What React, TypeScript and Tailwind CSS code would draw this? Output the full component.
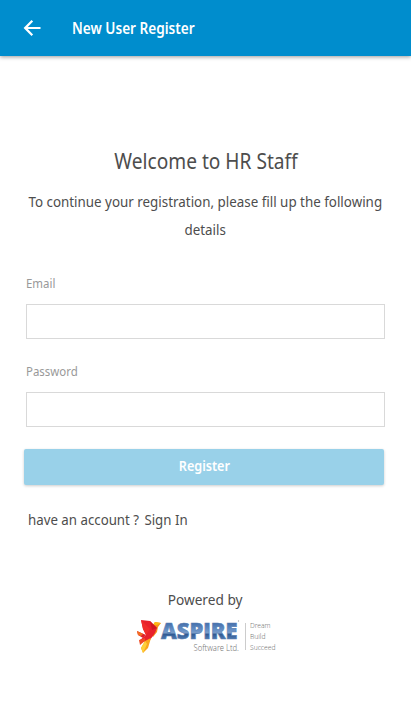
import { useState } from "react";

function AspireLogo() {
  return (
    <svg viewBox="0 0 141 36" className="h-9 w-[141px] overflow-visible" role="img" aria-label="Aspire Software Ltd.">
      <defs>
        <linearGradient id="word" gradientUnits="userSpaceOnUse" x1="0" y1="4" x2="0" y2="21">
          <stop offset="0" stopColor="#456fab" />
          <stop offset="0.4" stopColor="#648fc6" />
          <stop offset="0.58" stopColor="#7a9cc8" />
          <stop offset="0.66" stopColor="#315a92" />
          <stop offset="1" stopColor="#5580b6" />
        </linearGradient>
      </defs>
      {/* bird */}
      <path d="M15 7 18 3 24 4 21 8 20 13 16 18 13 14Z" fill="#f7941d" />
      <path d="M16 6 18 3 24 4 20 6Z" fill="#fdb913" />
      <path d="M4 1 13 2 20 9 18 14 13 21 8 23 3 21 9 16 6 10Z" fill="#e8212b" />
      <path d="M13 2 20 9 15 11Z" fill="#cf1820" />
      <path d="M4 1 13 10 9 16 6 10Z" fill="#f02c2a" />
      <path d="M0 12 9 16 6 19 1 16Z" fill="#e0202a" />
      <path d="M0 12 6 15 4 17 1 16Z" fill="#f36f21" />
      <path d="M2 21 8 19 8 22 3 26Z" fill="#f04a23" />
      <path d="M8 22 14 19 11 29 6 34 4 29Z" fill="#fba61c" />
      <path d="M8 22 10 25 6 34 4 29Z" fill="#fdd03a" />
      <text x="24" y="20" fontFamily="Open Sans, sans-serif" fontWeight="800" fontSize="22" textLength="76.500" lengthAdjust="spacingAndGlyphs" fill="url(#word)" stroke="#5a80b2" strokeWidth="0.600">ASPIRE</text>
      <g fontFamily="Noto Sans, sans-serif" fontWeight="300" fill="#777">
        <text x="56.500" y="32" fontSize="9" textLength="45.500" lengthAdjust="spacingAndGlyphs">Software Ltd.</text>
        <text x="113" y="9" fontSize="7.500" textLength="20.500" lengthAdjust="spacingAndGlyphs">Dream</text>
        <text x="113" y="20" fontSize="7.500" textLength="15.500" lengthAdjust="spacingAndGlyphs">Build</text>
        <text x="113" y="31" fontSize="7.500" textLength="25.500" lengthAdjust="spacingAndGlyphs">Succeed</text>
      </g>
      <path d="M108.500 4V31" stroke="#ccc" />
      <circle cx="101.500" cy="2" r="0.700" fill="#aaa" />
    </svg>
  );
}

export default function App() {
  const [email, setEmail] = useState("");
  const [password, setPassword] = useState("");

  return (
    <div className="flex h-[722px] w-full flex-col bg-white font-['Noto_Sans',sans-serif] text-[15px] text-[#4d4d4d]">
      <header className="flex h-14 shrink-0 items-center bg-[#008dcd] text-white shadow-[0_1px_4px_rgba(0,0,0,0.4)]">
        <button type="button" aria-label="Back" className="ml-5 flex size-6 items-center justify-center">
          <svg viewBox="0 0 24 24" fill="currentColor" className="size-6">
            <path d="M20.500 10.900H7.800l5.300-5.300-1.600-1.600L3.600 12l7.900 8 1.600-1.600L7.800 13.100h12.700z" />
          </svg>
        </button>
        <h1 className="-mt-px ml-7 origin-left scale-x-[0.85] whitespace-nowrap text-[16px] font-semibold">New User Register</h1>
      </header>

      <main className="flex flex-col pt-[88px]">
        <h2 className="ml-px h-[34px] self-center whitespace-nowrap text-[21.5px] leading-[34px] scale-x-[0.89]">Welcome to HR Staff</h2>
        <div className="mt-[9px] flex flex-col items-center leading-7">
          <p className="whitespace-nowrap scale-x-[0.892]">To continue your registration, please fill up the following</p>
          <p className="whitespace-nowrap scale-x-[0.89]">details</p>
        </div>

        <form className="mt-[30px] flex flex-col px-[26px]" onSubmit={(e) => e.preventDefault()}>
          <label htmlFor="email" className="h-5 w-fit origin-left scale-x-[0.88] text-[13px] leading-5 text-[#999]">Email</label>
          <input
            id="email"
            type="email"
            value={email}
            onChange={(e) => setEmail(e.target.value)}
            className="mt-[11px] h-[35px] w-[359px] border border-[#d9d9d9] px-2 outline-none"
          />
          <label htmlFor="password" className="mt-[22px] h-5 w-fit origin-left scale-x-[0.88] text-[13px] leading-5 text-[#999]">Password</label>
          <input
            id="password"
            type="password"
            value={password}
            onChange={(e) => setPassword(e.target.value)}
            className="mt-[11px] h-[35px] w-[359px] border border-[#d9d9d9] px-2 outline-none"
          />
          <button
            type="submit"
            className="-ml-0.5 mt-[22px] flex h-9 w-[360px] items-center justify-center rounded-xs bg-[#99d1e9] text-white shadow-[0_1px_3px_rgba(0,0,0,0.2)]"
          >
            <span className="-mt-0.5 scale-x-[0.87] text-[14.5px] font-semibold">Register</span>
          </button>
        </form>

        <p className="ml-7 mt-[22px] flex h-6 w-fit origin-left scale-x-[0.885] gap-1.5 whitespace-nowrap leading-6">
          <span>have an account ?</span>
          <a href="#signin">Sign In</a>
        </p>

        <footer className="mt-14 flex flex-col items-center">
          <p className="h-6 scale-x-[0.91] leading-6">Powered by</p>
          <div className="ml-[3px] mt-2">
            <AspireLogo />
          </div>
        </footer>
      </main>
    </div>
  );
}
